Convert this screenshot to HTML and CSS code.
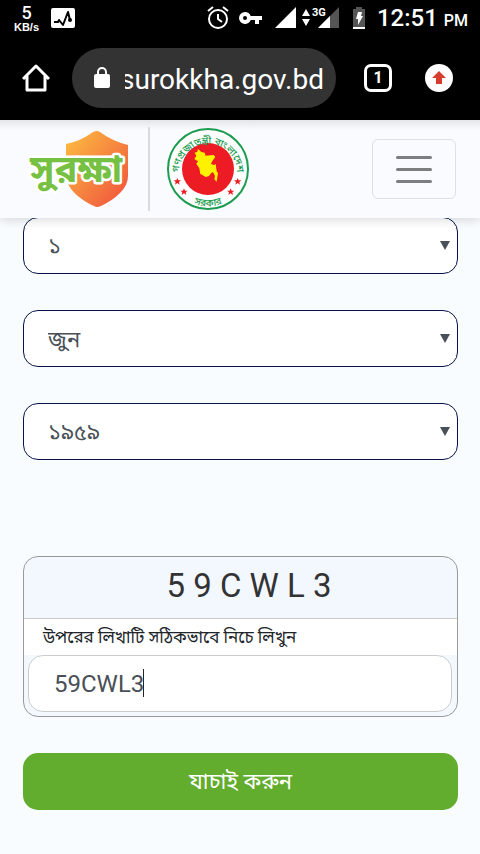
FILE: index.html
```html
<!DOCTYPE html>
<html lang="bn">
<head>
  <meta charset="UTF-8" />
  <meta name="viewport" content="width=device-width, initial-scale=1.0"/>
  <title>সুরক্ষা</title>
  <link rel="stylesheet" href="styles.css">
</head>
<body>
  <div class="status-bar">
    <div class="speed"><b>5</b><span>KB/s</span></div>
    <svg class="activity" width="24" height="20" viewBox="0 0 24 20">
      <rect width="24" height="20" rx="2" fill="#fff"/>
      <path d="M3 14h4l1-2 4 5 5-13 2 8" fill="none" stroke="#000" stroke-width="2" stroke-linejoin="round"/>
      <circle cx="19" cy="12" r="2"/>
    </svg>
    <svg class="alarm" width="22" height="24" viewBox="0 0 22 24" fill="none" stroke="#fff" stroke-width="2">
      <circle cx="11" cy="13" r="9"/>
      <path d="M11 8v5l4 3M1 5l5-4M21 5l-5-4"/>
    </svg>
    <svg class="key" width="24" height="14" viewBox="0 0 24 14">
      <path fill="#fff" fill-rule="evenodd" d="M6 1a6 6 0 1 0 5.700 8H16v4h4V9h3V5H11.700A6 6 0 0 0 6 1zm0 4a2 2 0 1 1 0 4 2 2 0 0 1 0-4z"/>
    </svg>
    <svg class="signal" width="22" height="22" viewBox="0 0 22 22"><path d="M0 21L21 0v21z" fill="#fff"/></svg>
    <svg class="mobile" width="40" height="24" viewBox="0 0 40 24">
      <path d="M2 10l4-7 4 7zM2 13h8l-4 7z" fill="#fff"/>
      <path d="M18 22L39 1v21z" fill="#555"/>
      <path d="M18 22L30 10v12z" fill="#fff"/>
      <text x="12" y="10">3G</text>
    </svg>
    <svg class="battery" width="12" height="22" viewBox="0 0 12 22">
      <path d="M3 0h6v2h3v20H0V2h3z" fill="#555"/>
      <path d="M0 20h12v2H0zM5 5h4L8 9h2l-5 9V12H3z" fill="#fff"/>
    </svg>
    <div class="clock">12:51 <small>PM</small></div>
  </div>

  <div class="browser-bar">
    <button class="icon-btn" type="button" aria-label="Home">
      <svg width="28" height="28" viewBox="0 0 28 28" fill="none" stroke="#fff" stroke-width="3" stroke-linejoin="round">
        <path d="M1 15L14 2l13 13M5 12v14h18V12"/>
      </svg>
    </button>
    <div class="address">
      <svg width="16" height="22" viewBox="0 0 16 22">
        <rect y="7" width="16" height="14" rx="2" fill="#fff"/>
        <path d="M4 8V5a4 4 0 0 1 8 0v3" fill="none" stroke="#fff" stroke-width="2"/>
      </svg>
      <input type="text" value="surokkha.gov.bd" aria-label="Address" />
    </div>
    <button class="tabs" type="button">1</button>
    <button class="icon-btn" type="button" aria-label="Update">
      <svg width="28" height="28" viewBox="0 0 28 28">
        <circle cx="14" cy="14" r="14" fill="#fff"/>
        <path d="M14 7l7 7h-4v6h-6v-6H7z" fill="#d63b2b"/>
      </svg>
    </button>
  </div>

  <header class="navbar">
    <a class="brand" href="#" aria-label="সুরক্ষা">
      <svg width="104" height="84" viewBox="0 0 104 84">
        <defs>
          <linearGradient id="shield" x1="0" y1="0" x2="1" y2="1">
            <stop offset="0" stop-color="#fcbf40"/>
            <stop offset="1" stop-color="#f04e3e"/>
          </linearGradient>
        </defs>
        <path d="M38 17q15-3 27-12q4-2 7 0q12 9 28 13v31c0 12-11 22-27 30q-4 2-7 0C51 72 38 61 38 48z" fill="url(#shield)"/>
        <text class="logo-text" x="2" y="55">সুরক্ষা</text>
      </svg>
    </a>
    <a class="emblem" href="#" aria-label="গণপ্রজাতন্ত্রী বাংলাদেশ সরকার">
      <svg width="84" height="84" viewBox="0 0 84 84">
        <defs>
          <path id="top" d="M13 46A29 29 0 1 1 71 46"/>
          <path id="bottom" d="M10 61A37 37 0 0 0 74 61"/>
        </defs>
        <circle cx="42" cy="42" r="40" fill="#fff" stroke="#1b9c50" stroke-width="2"/>
        <circle cx="42" cy="42" r="26" fill="#ed1c24"/>
        <g transform="translate(-6 -5) scale(.3333)">
          <path fill="#fff200" d="M114 81l10 9 10 2 3 9 24-2 5 6-9 12-4 9 9 3 5-3 3 22 4 5-4 26-7-7 2-10-6-12-6 4-6 8-10 3-10-6-6-3-3-17-9-14 5-7-11-7 6-10-5-9 8-3z"/>
          <path id="star" fill="#ed1c24" d="M52 168l3 7h8l-6 5 2 8-7-5-7 5 2-8-6-5h8z"/>
          <use href="#star" x="20" y="31"/>
          <use href="#star" x="160" y="31"/>
          <use href="#star" x="181"/>
        </g>
        <text class="seal-text"><textPath href="#top" startOffset="50%">গণপ্রজাতন্ত্রী বাংলাদেশ</textPath></text>
        <text class="seal-text"><textPath href="#bottom" startOffset="50%">সরকার</textPath></text>
      </svg>
    </a>
    <button class="toggler" type="button" aria-label="Menu"><span></span><span></span><span></span></button>
  </header>

  <form class="verify">
    <div class="select">
      <select aria-label="দিন"><option>১</option></select>
    </div>
    <div class="select">
      <select aria-label="মাস"><option>জুন</option></select>
    </div>
    <div class="select">
      <select aria-label="বছর"><option>১৯৫৯</option></select>
    </div>

    <div class="captcha">
      <div class="captcha-code">5 9 C W L 3</div>
      <label for="captcha">উপরের লিখাটি সঠিকভাবে নিচে লিখুন</label>
      <div class="captcha-field">
        <input type="text" id="captcha" value="59CWL3" />
        <span class="caret"></span>
      </div>
    </div>

    <button class="submit" type="submit">যাচাই করুন</button>
  </form>
</body>
</html>
```
FILE: styles.css
```css
* {
  box-sizing: border-box;
}
body {
  margin: 0;
  background: #f8fcff;
  color: #212529;
  font-family: Roboto, "Noto Sans Bengali", sans-serif;
}
button, input, select {
  font-family: inherit;
  margin: 0;
}
svg {
  display: block;
  flex: none;
}

/* phone status bar */
.status-bar {
  display: flex;
  align-items: center;
  height: 36px;
  padding: 0 12px 0 14px;
  background: #000;
  color: #fff;
}
.speed {
  display: flex;
  flex-direction: column;
  align-items: center;
  width: 25px;
  margin-right: 12px;
  font-family: "Liberation Sans", sans-serif;
  font-size: 11px;
  font-weight: bold;
  line-height: 11px;
}
.speed b {
  font-family: Roboto, sans-serif;
  font-size: 18px;
  font-weight: 500;
  line-height: 18px;
}
.alarm {
  margin-left: auto;
}
.key {
  margin-left: 10px;
}
.signal {
  margin: 0 3px 0 12px;
}
.mobile text {
  fill: #fff;
  font-size: 11px;
  font-weight: bold;
}
.battery {
  margin: 0 12px 0 13px;
}
.clock {
  font-size: 24px;
  font-weight: 500;
  white-space: nowrap;
}
.clock small {
  font-size: 16px;
}

/* browser toolbar */
.browser-bar {
  display: flex;
  align-items: center;
  height: 84px;
  padding: 0 27px 0 22px;
  background: #000;
}
.icon-btn {
  padding: 0;
  border: none;
  background: none;
}
.address {
  display: flex;
  flex: 1;
  align-items: center;
  min-width: 0;
  height: 60px;
  margin: 0 28px 0 22px;
  padding: 0 10px 0 22px;
  border-radius: 30px;
  background: #333;
}
.address input {
  flex: 1;
  min-width: 0;
  margin-left: 15px;
  padding: 2px 0 0;
  border: none;
  background: none;
  color: #fff;
  font-size: 28px;
  text-indent: -5px;
}
.tabs {
  width: 28px;
  height: 28px;
  margin-right: 33px;
  padding: 0;
  border: 3px solid #fff;
  border-radius: 7px;
  background: none;
  color: #fff;
  font-size: 16px;
  font-weight: bold;
  line-height: 20px;
}

/* site header */
.navbar {
  position: relative;
  z-index: 1;
  display: flex;
  align-items: center;
  height: 98px;
  padding: 0 24px 0 28px;
  background: linear-gradient(#e4e5e9, #fafbff 10px);
  box-shadow: 0 2px 10px rgba(0, 0, 0, 0.15);
}
.brand {
  padding-right: 16px;
  border-right: 2px solid #d8dade;
}
.emblem {
  margin-left: 16px;
}
.logo-text {
  fill: #76c043;
  stroke: #fff;
  stroke-width: 5px;
  stroke-linejoin: round;
  paint-order: stroke;
  font-size: 38px;
  font-weight: bold;
}
.seal-text {
  fill: #1b9c50;
  font-size: 10px;
  font-weight: 500;
  text-anchor: middle;
}
.toggler {
  display: flex;
  flex-direction: column;
  align-items: center;
  justify-content: center;
  gap: 9px;
  width: 84px;
  height: 60px;
  margin-left: auto;
  border: 1px solid #dfe0e4;
  border-radius: 6px;
  background: none;
}
.toggler span {
  width: 36px;
  height: 3px;
  border-radius: 2px;
  background: #7d7e80;
}

/* form */
.verify {
  display: flex;
  flex-direction: column;
  gap: 36px;
  margin-top: -1px;
  padding: 0 22px 44px 23px;
}
.select {
  position: relative;
}
.select::after {
  content: "";
  position: absolute;
  top: 24px;
  right: 8px;
  border: 5px solid transparent;
  border-top: 9px solid #495057;
  border-bottom: none;
  pointer-events: none;
}
.select select {
  display: block;
  width: 100%;
  height: 57px;
  padding: 2px 24px 0;
  border: 1px solid #08134a;
  border-radius: 15px;
  background: #fff;
  color: #495057;
  font-size: 22px;
  appearance: none;
}
.captcha {
  margin-top: 60px;
  border: 1px solid #999;
  border-radius: 15px;
  background: #f3f8ff;
}
.captcha-code {
  height: 62px;
  padding-left: 17px;
  border-bottom: 1px solid #ccc;
  color: #333;
  font-size: 33px;
  line-height: 58px;
  text-align: center;
}
.captcha label {
  display: block;
  height: 36px;
  padding-left: 19px;
  background: #fff;
  font-size: 17px;
  line-height: 36px;
}
.captcha-field {
  position: relative;
  padding: 0 5px 4px 4px;
}
.captcha-field input {
  display: block;
  width: 100%;
  height: 57px;
  padding: 0 25px;
  border: 1px solid #ccc;
  border-radius: 15px;
  background: #fff;
  color: #495057;
  font-size: 24px;
}
.caret {
  position: absolute;
  top: 14px;
  left: 119px;
  width: 1px;
  height: 28px;
  background: #212529;
}
.submit {
  height: 57px;
  padding-top: 4px;
  border: none;
  border-radius: 15px;
  background: #62ac2e;
  color: #fff;
  font-size: 22px;
}
```
